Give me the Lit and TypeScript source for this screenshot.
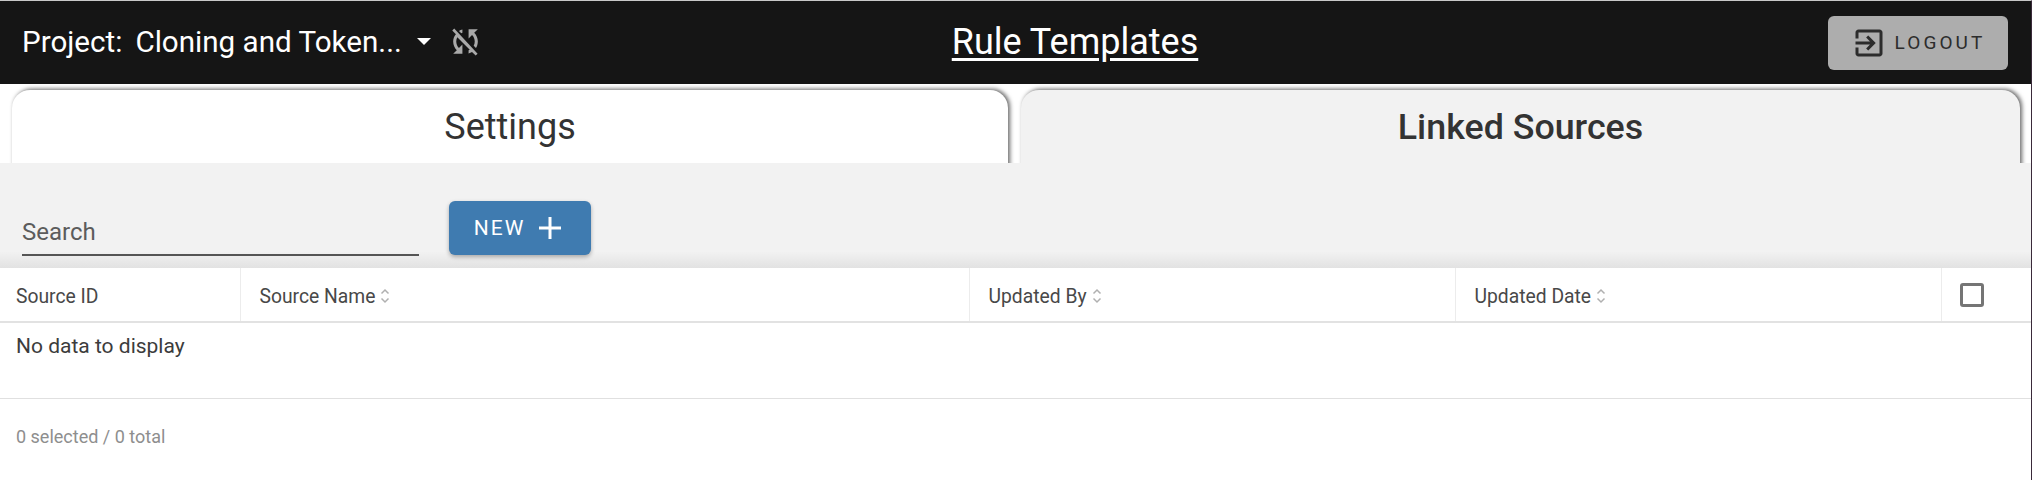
import { LitElement, html, css } from "lit";
import { customElement } from "lit/decorators.js";

const sortIcon = html`<svg class="sort" width="10" height="18" viewBox="0 0 10 18" fill="none" stroke="#b0b0b0" stroke-width="1.5"><path d="M1.5 6.5 5 3l3.5 3.5"/><path d="M1.5 11.5 5 15l3.5-3.5"/></svg>`;

@customElement("app-root")
export class AppRoot extends LitElement {
  static styles = css`
    :host { display: block; font-family: Roboto, "Liberation Sans", sans-serif; height: 480px; background: #fff; border-top: 1px solid #c8c8c8; border-right: 1px solid #3a2a3a; box-sizing: border-box; overflow: hidden; }
    .bar { height: 83px; background: #151515; display: grid; grid-template-columns: 1fr auto 1fr; align-items: center; padding: 0 23px 0 22px; color: #fff; }
    .project { display: flex; align-items: center; font-size: 29.6px; padding-bottom: 2px; }
    .project .name { margin-left: 13px; }
    .caret { width: 0; height: 0; border-left: 7px solid transparent; border-right: 7px solid transparent; border-top: 7px solid #fff; margin: 0 0 0 15px; }
    .sync { margin-left: 16px; display: block; }
    .title { font-size: 36px; text-decoration: underline; text-underline-offset: 4px; margin-left: 120px; padding-bottom: 2px; }
    .logout { justify-self: end; width: 180px; height: 54px; box-sizing: border-box; background: #adadad; border-radius: 6px; display: flex; align-items: center; justify-content: center; gap: 8px; color: #2c2c2c; font-size: 19px; letter-spacing: 3.1px; font-weight: 400; }
    .tabs { display: flex; gap: 13px; padding: 6px 11px 0 12px; height: 79px; box-sizing: border-box; overflow: hidden; }
    .tab { flex: 1; box-sizing: border-box; border-radius: 18px 18px 0 0; display: flex; align-items: center; justify-content: center; font-size: 36px; font-weight: 400; color: #333; background: #fff; box-shadow: 2px -1px 4px #6a6a6a; height: 90px; padding-bottom: 17px; }
    .tab:first-child { flex: 0 0 996px; }
    .tab.active { background: #f2f2f2; font-weight: 500; font-size: 35.8px; }
    .tools { height: 105px; background: linear-gradient(#f2f2f2 84%, #e2e2e2 100%); display: flex; align-items: flex-start; padding: 0 0 0 22px; box-sizing: border-box; }
    .search { width: 397px; height: 61px; margin-top: 32px; border-bottom: 2px solid #555; box-sizing: border-box; font-size: 24px; color: #5c5c5c; display: flex; align-items: flex-end; padding-bottom: 8px; font-weight: 400; }
    .new { margin: 38px 0 0 30px; width: 142px; height: 54px; background: #3f7bb0; border-radius: 6px; box-shadow: 0 2px 4px rgba(0,0,0,.3); color: #fff; display: flex; align-items: center; justify-content: center; gap: 12px; font-size: 21px; font-weight: 400; letter-spacing: 2px; padding-right: 3px; box-sizing: border-box; }
    .thead { display: grid; grid-template-columns: 241px 729px 486px 486px 1fr; height: 55px; border-bottom: 2px solid #e2e2e2; box-sizing: border-box; }
    .th { display: flex; align-items: center; gap: 5px; padding-left: 18.5px; font-size: 19.3px; color: #484848; border-right: 1px solid #ececec; padding-top: 3px; }
    .th:first-child { padding-left: 16px; }
    .th:last-child { border-right: none; padding-left: 18px; padding-top: 0; }
    .check { width: 24px; height: 24px; border: 3px solid #757575; border-radius: 3px; box-sizing: border-box; }
    .empty { height: 76px; box-sizing: border-box; padding: 11px 16px; font-size: 21px; color: #3c3c3c; font-weight: 400; border-bottom: 1px solid #e0e0e0; }
    .foot { padding: 27px 16px; font-size: 18px; color: #8e8e8e; font-weight: 400; }
  `;

  render() {
    return html`
      <div class="bar">
        <div class="project">
          <span>Project:</span><span class="name">Cloning and Token...</span><span class="caret"></span>
          <svg class="sync" width="37" height="37" viewBox="0 0 24 24" fill="#a9a9a9"><path d="M10 6.35V4.26c-.8.21-1.55.54-2.23.96l1.46 1.46c.25-.12.5-.24.77-.33zM3.41 4.86l2.36 2.36C4.68 8.45 4 10.14 4 12c0 2.21.91 4.2 2.36 5.64L4 20h6v-6l-2.24 2.24C6.68 15.15 6 13.66 6 12c0-1 .25-1.94.68-2.77l8.08 8.08c-.25.13-.5.25-.77.34v2.09c.8-.21 1.55-.54 2.23-.96l2.36 2.36 1.27-1.27L4.68 3.59 3.41 4.86zM20 4h-6v6l2.24-2.24C17.32 8.85 18 10.34 18 12c0 1-.25 1.94-.68 2.77l1.46 1.46C19.32 15.55 20 13.86 20 12c0-2.21-.91-4.2-2.36-5.64L20 4z"/></svg>
        </div>
        <div class="title">Rule Templates</div>
        <div class="logout">
          <svg width="36" height="36" viewBox="0 0 24 24" fill="#2c2c2c"><path d="M10.09 15.59 11.5 17l5-5-5-5-1.41 1.41L12.67 11H3v2h9.67l-2.58 2.59zM19 3H5c-1.11 0-2 .9-2 2v4h2V5h14v14H5v-4H3v4c0 1.1.89 2 2 2h14c1.1 0 2-.9 2-2V5c0-1.1-.9-2-2-2z"/></svg>
          <span>LOGOUT</span>
        </div>
      </div>
      <div class="tabs">
        <div class="tab">Settings</div>
        <div class="tab active">Linked Sources</div>
      </div>
      <div class="tools">
        <div class="search">Search</div>
        <div class="new"><span>NEW</span><svg width="26" height="26" viewBox="0 0 26 26" fill="none" stroke="#fff" stroke-width="3"><path d="M13 2v22M2 13h22"/></svg></div>
      </div>
      <div class="thead">
        <div class="th">Source ID</div>
        <div class="th">Source Name ${sortIcon}</div>
        <div class="th">Updated By ${sortIcon}</div>
        <div class="th">Updated Date ${sortIcon}</div>
        <div class="th"><span class="check"></span></div>
      </div>
      <div class="empty">No data to display</div>
      <div class="foot">0 selected / 0 total</div>
    `;
  }
}
